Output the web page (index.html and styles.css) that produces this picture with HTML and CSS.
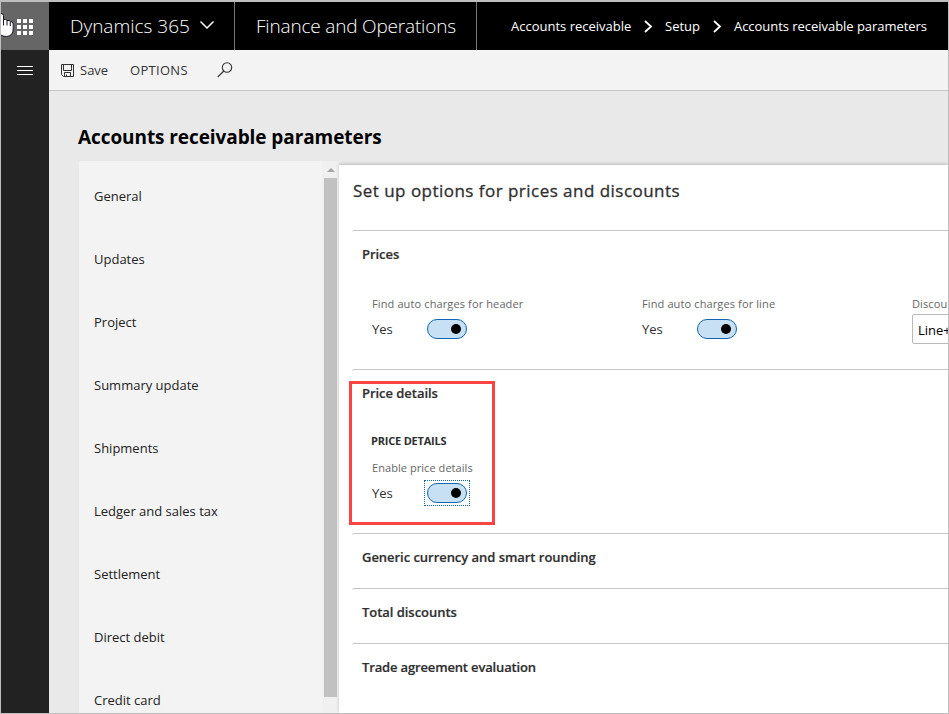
FILE: index.html
```html
<!DOCTYPE html>
<html lang="en">
<head>
<meta charset="utf-8">
<title>Accounts receivable parameters</title>
<link rel="stylesheet" href="styles.css">
</head>
<body>
<div class="window">
  <header class="topbar">
    <div class="launcher">
      <svg class="waffle" width="16" height="16" viewBox="0 0 16 16" fill="#fff" shape-rendering="crispEdges"><path d="M0 0h4v4H0zM6 0h4v4H6zM12 0h4v4h-4zM0 6h4v4H0zM6 6h4v4H6zM12 6h4v4h-4zM0 12h4v4H0zM6 12h4v4H6zM12 12h4v4h-4z"/></svg>
      <svg class="cursor" width="13" height="26" viewBox="0 0 13 26"><path d="M-3 14V2Q-2 .5 0 .5Q2.500 .5 2.500 2.500V6.500Q5 6 6 7.500Q8.500 7 9.300 8.500Q12.200 8.500 12.200 11V16Q12.200 23 5.500 23.500Q-1 23.500-3 18z" fill="#fff" stroke="#15152a"/><path d="M2.500 6.500v6M6 8v4.500M9.300 9v4" stroke="#15152a" fill="none"/></svg>
    </div>
    <div class="brand"><span class="t-brand">Dynamics 365</span>
      <svg width="16" height="10" viewBox="0 0 16 10" fill="none" stroke="#fff" stroke-width="1.500"><path d="M1.500 1.500L8 8L14.500 1.500"/></svg>
    </div>
    <div class="product"><span class="t-product">Finance and Operations</span></div>
    <nav class="crumbs">
      <span class="t-crumb1">Accounts receivable</span>
      <svg width="9" height="13" viewBox="0 0 9 13" fill="none" stroke="#fff" stroke-width="1.800"><path d="M1 1L7 6.500L1 12"/></svg>
      <span class="t-crumb2">Setup</span>
      <svg width="9" height="13" viewBox="0 0 9 13" fill="none" stroke="#fff" stroke-width="1.800"><path d="M1 1L7 6.500L1 12"/></svg>
      <span class="t-crumb3">Accounts receivable parameters</span>
    </nav>
  </header>
  <div class="body">
    <aside class="rail">
      <svg width="16" height="9" viewBox="0 0 16 9" fill="#fff" shape-rendering="crispEdges"><path d="M0 0h16v1H0zM0 4h16v1H0zM0 8h16v1H0z"/></svg>
    </aside>
    <main class="workspace">
      <div class="toolbar">
        <svg class="save" width="13" height="13" viewBox="0 0 13 13" fill="none" stroke="#333"><path d="M.5 .5H12.500V12.500H2.500L.5 10.500zM2.500 .5V6.500H10.500V.5M3.500 12.500V8.500H9.500V12.500M5.500 10.500V12.500"/></svg>
        <span class="t-save">Save</span>
        <span class="t-options">OPTIONS</span>
        <svg class="search" width="16" height="16" viewBox="0 0 16 16" fill="none" stroke="#333" stroke-width="1.100"><circle cx="10" cy="5.500" r="4.700"/><path d="M6.800 9L.7 15"/></svg>
      </div>
      <h1 class="title">Accounts receivable parameters</h1>
      <div class="columns">
        <div class="tabs">
          <ul class="tablist">
            <li>General</li>
            <li>Updates</li>
            <li>Project</li>
            <li>Summary update</li>
            <li>Shipments</li>
            <li>Ledger and sales tax</li>
            <li>Settlement</li>
            <li>Direct debit</li>
            <li>Credit card</li>
          </ul>
          <div class="scrollbar">
            <svg width="8" height="4" viewBox="0 0 8 4" fill="#a3a3a3"><path d="M0 4L4 0L8 4z"/></svg>
            <div class="thumb"></div>
          </div>
        </div>
        <div class="content">
          <h2>Set up options for prices and discounts</h2>
          <section class="group prices">
            <h3>Prices</h3>
            <div class="fields">
              <div class="field">
                <span class="label">Find auto charges for header</span>
                <div class="value"><span class="yes">Yes</span><i class="toggle"></i></div>
              </div>
              <div class="field">
                <span class="label">Find auto charges for line</span>
                <div class="value"><span class="yes">Yes</span><i class="toggle"></i></div>
              </div>
              <div class="field">
                <span class="label">Discou</span>
                <div class="select">Line+</div>
              </div>
            </div>
          </section>
          <section class="group details">
            <div class="highlight"></div>
            <h3>Price details</h3>
            <div class="field">
              <h4>PRICE DETAILS</h4>
              <span class="label">Enable price details</span>
              <div class="value"><span class="yes">Yes</span><span class="focus"><i class="toggle"></i></span></div>
            </div>
          </section>
          <section class="group closed"><h3>Generic currency and smart rounding</h3></section>
          <section class="group closed"><h3>Total discounts</h3></section>
          <section class="group closed"><h3 class="tight">Trade agreement evaluation</h3></section>
        </div>
      </div>
    </main>
  </div>
</div>
</body>
</html>
```
FILE: styles.css
```css
* { box-sizing: border-box; }
body { margin: 0; overflow: hidden; font-family: "Open Sans", "Noto Sans", sans-serif; font-size: 13px; color: #222; }
h1, h2, h3, h4, ul { margin: 0; padding: 0; list-style: none; }
span, h1, h2, h3, h4 { white-space: nowrap; }
svg { display: block; flex: none; }
.window { width: 949px; height: 714px; border: 1px solid #bebebe; border-top-width: 2px; display: flex; flex-direction: column; overflow: hidden; background: #e9e9e9; }

.topbar { flex: none; height: 48px; background: #000; color: #fff; display: flex; }
.launcher { position: relative; width: 48px; background: #666; display: flex; align-items: center; justify-content: center; padding-top: 2px; }
.cursor { position: absolute; left: 0; top: 11px; }
.brand { width: 186px; border-right: 1px solid #767676; display: flex; align-items: center; padding-left: 21px; gap: 10px; font-size: 19px; font-weight: 300; }
.brand span { width: 119px; }
.brand svg { margin-bottom: 2px; }
.product { width: 242px; border-right: 1px solid #767676; display: flex; align-items: center; padding-left: 21px; font-size: 19px; font-weight: 300; letter-spacing: -.18px; }
.crumbs { display: flex; align-items: center; padding-left: 34px; font-size: 13px; }
.crumbs svg { margin: 0 12px 0 13px; }
.t-crumb1 { width: 120px; }
.t-crumb2 { width: 35px; }
.t-crumb3 { letter-spacing: -.04px; }

.body { flex: 1; display: flex; min-height: 0; }
.rail { width: 48px; background: #222; padding: 16px 0 0 16px; }
.workspace { flex: 1; min-width: 0; display: flex; flex-direction: column; }
.toolbar { flex: none; height: 41px; background: #f3f3f3; border-bottom: 1px solid #c6c6c6; display: flex; align-items: center; padding-left: 12px; color: #333; }
.t-save { width: 50px; margin-left: 6px; }
.t-options { width: 87px; letter-spacing: .3px; }
.title { flex: none; height: 70px; padding: 33px 0 0 29px; font-size: 19px; line-height: 26px; font-weight: 700; letter-spacing: -.08px; color: #000; }
.columns { flex: 1; min-height: 0; display: flex; padding-left: 30px; }

.tabs { width: 260px; background: #f3f3f3; display: flex; overflow: hidden; }
.tablist { width: 243px; padding-top: 3px; }
.tablist li { height: 63px; padding-left: 15px; display: flex; align-items: center; }
.scrollbar { width: 17px; background: #f0f0f0; display: flex; flex-direction: column; align-items: center; padding-top: 7px; }
.thumb { width: 13px; height: 519px; margin-top: 6px; background: #c1c1c1; }

.content { flex: 1; min-width: 0; overflow: hidden; margin-top: 4px; padding-left: 13px; background: #fff; box-shadow: 0 -1px 3px rgba(0,0,0,.2); color: #2f2f2f; }
.content h2 { height: 65px; padding: 13px 0 0 1px; font-size: 17px; line-height: 25px; font-weight: 500; letter-spacing: .47px; -webkit-text-stroke: .3px #2f2f2f; }
.group { position: relative; border-top: 1px solid #c6c6c6; border-top-left-radius: 2px; padding-left: 10px; }
.group h3 { height: 46px; line-height: 46px; font-size: 13px; font-weight: 600; letter-spacing: -.04px; -webkit-text-stroke: .2px #2f2f2f; }
.group .tight { letter-spacing: -.15px; }
.prices { height: 139px; }
.details { height: 164px; }
.closed { height: 55px; }
.fields { display: flex; padding-top: 19px; }
.field { flex: none; width: 270px; padding-left: 10px; }
.label { display: block; height: 16px; line-height: 16px; font-size: 11px; letter-spacing: .12px; color: #666; }
.value { display: flex; align-items: center; height: 20px; margin-top: 7px; }
.yes { width: 55px; }
.toggle { width: 40px; height: 20px; border: 1px solid #1066b0; border-radius: 10px; background: #c7e0f4; display: flex; align-items: center; justify-content: flex-end; padding-right: 5px; }
.toggle::after { content: ""; width: 10px; height: 10px; border-radius: 50%; background: #000; }
.focus { padding: 2px; margin-left: -3px; border: 1px dotted #1066b0; }
.select { width: 150px; height: 30px; margin-top: 2px; border: 1px solid #bababa; border-radius: 2px; padding-left: 5px; line-height: 30px; color: #000; }
.details h4 { height: 20px; margin: 15px 0 0 -1px; line-height: 20px; font-size: 11px; font-weight: 700; letter-spacing: -.2px; }
.details .label { margin-top: 9px; letter-spacing: .06px; }
.highlight { position: absolute; left: -3px; top: 11px; width: 146px; height: 144px; border: 3px solid #fa4343; }
```
